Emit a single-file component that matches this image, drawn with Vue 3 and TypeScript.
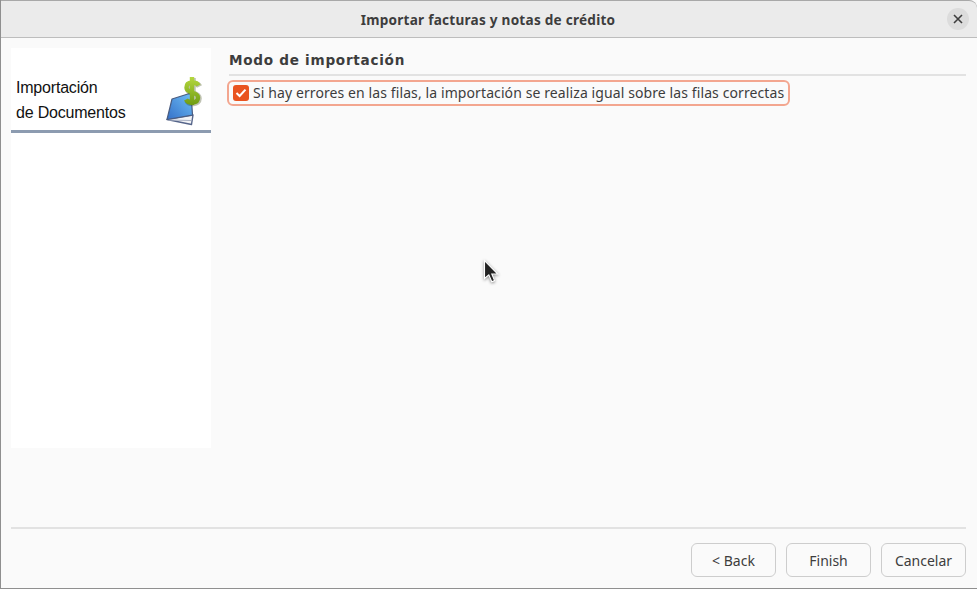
<script setup lang="ts">
const buttons: string[] = ['< Back', 'Finish', 'Cancelar']
</script>

<template>
  <div class="window">
    <header class="titlebar">
      <span class="title">Importar facturas y notas de crédito</span>
      <button class="close" aria-label="Cerrar">
        <svg width="10" height="10" viewBox="0 0 10 10">
          <path d="M1 1 9 9M9 1 1 9" stroke="#3d3d3d" stroke-width="1.6" fill="none" />
        </svg>
      </button>
    </header>
    <main class="body">
      <aside class="side">
        <div class="side-head">
          <div class="side-text">Importación<br />de Documentos</div>
          <svg class="side-icon" width="38" height="50" viewBox="0 0 38 50">
            <defs>
              <linearGradient id="cover" x1="0" y1="1" x2="1" y2="0">
                <stop offset="0" stop-color="#3470c8" />
                <stop offset="1" stop-color="#6fc0f7" />
              </linearGradient>
              <linearGradient id="coin" x1="0" y1="0" x2="0" y2="1">
                <stop offset="0" stop-color="#b5d83e" />
                <stop offset="1" stop-color="#6f9c12" />
              </linearGradient>
            </defs>
            <path d="M1 43.5 25.5 48.5 27 39Z" fill="#f2f3f6" stroke="#56658a" stroke-width="1.4" stroke-linejoin="round" />
            <path d="M3 44 25 44.5" stroke="#aab2c4" stroke-width="1" fill="none" />
            <path d="M1 43.5 6 23 25 17 26.5 39 Z" fill="url(#cover)" stroke="#4a5c80" stroke-width="1.2" stroke-linejoin="round" />
            <path d="M32.5 9.5C30.5 5.5 20.5 5 20.5 11.5C20.5 18 32 15 32 21.5C32 28 22 27.5 20 23.5M26 1V29" stroke="#2e3808" stroke-opacity=".3" stroke-width="5.6" fill="none" transform="translate(1 1)" />
            <path d="M32.5 9.5C30.5 5.5 20.5 5 20.5 11.5C20.5 18 32 15 32 21.5C32 28 22 27.5 20 23.5M26 1V29" stroke="url(#coin)" stroke-width="4.4" fill="none" />
          </svg>
        </div>
      </aside>
      <section class="content">
        <h2 class="section-title">Modo de importación</h2>
        <label class="option">
          <span class="check">
            <svg width="12" height="10" viewBox="0 0 12 10">
              <path d="M1.5 5 4.6 8 10.5 1.6" stroke="#fff" stroke-width="2" fill="none" />
            </svg>
          </span>
          <span class="option-text">Si hay errores en las filas, la importación se realiza igual sobre las filas correctas</span>
        </label>
      </section>
    </main>
    <footer class="footer">
      <div class="actions">
        <button v-for="b in buttons" :key="b" class="btn">{{ b }}</button>
      </div>
    </footer>
    <svg class="cursor" width="18" height="27" viewBox="0 0 18 27">
      <path d="M1.5 1.5V19.5L5.8 15.8 8.8 22.8 11.6 21.6 8.8 15H14.8Z" fill="#232323" stroke="#fff" stroke-width="1.1" />
    </svg>
  </div>
</template>

<style>
html, body { margin: 0; background: #fafafa; }
</style>

<style scoped>
.window {
  position: relative;
  width: 977px;
  height: 589px;
  box-sizing: border-box;
  border-left: 1px solid #8f8f8f;
  border-bottom: 1px solid #8f8f8f;
  background: #fafafa;
  display: flex;
  flex-direction: column;
  overflow: hidden;
  font-family: "Noto Sans", sans-serif;
  color: #3d3d3d;
}
.titlebar {
  height: 38px;
  flex: none;
  box-sizing: border-box;
  border-top: 1px solid #a8a8a8;
  border-bottom: 1px solid #bdbdbd;
  border-top-right-radius: 8px;
  background: #ebebeb;
  display: flex;
  align-items: center;
  justify-content: center;
  position: relative;
}
.title {
  font-size: 13.6px;
  font-weight: 700;
  letter-spacing: 0.24px;
  color: #3d3d3d;
  margin-left: -2px;
  margin-top: 1px;
}
.close {
  position: absolute;
  right: 8px;
  top: 7px;
  width: 22px;
  height: 22px;
  padding: 0;
  border: 0;
  border-radius: 50%;
  background: #dcdcdc;
  display: flex;
  align-items: center;
  justify-content: center;
}
.body {
  flex: 1;
  display: flex;
  padding: 10px 11px 0 10px;
  gap: 18px;
  min-height: 0;
}
.side {
  width: 200px;
  height: 400px;
  flex: none;
  background: #fff;
}
.side-head {
  height: 85px;
  box-sizing: border-box;
  border-bottom: 3px solid #8c9bb0;
  display: flex;
  align-items: flex-end;
  justify-content: space-between;
  padding: 0 7px 5px 5px;
}
.side-text {
  font-family: "Liberation Sans", sans-serif;
  font-size: 16px;
  line-height: 25px;
  letter-spacing: -0.2px;
  color: #111;
}
.side-icon {
  margin-bottom: -1px;
}
.content {
  flex: 1;
  min-width: 0;
  display: flex;
  flex-direction: column;
  align-items: flex-start;
}
.section-title {
  align-self: stretch;
  margin: 0;
  height: 28px;
  box-sizing: border-box;
  border-bottom: 2px solid #e2e2e2;
  font-family: "DejaVu Sans", sans-serif;
  font-size: 13.6px;
  line-height: 24px;
  letter-spacing: 0.72px;
  font-weight: 700;
  color: #3d3d3d;
}
.option {
  margin-top: 4px;
  margin-left: -2px;
  height: 26px;
  box-sizing: border-box;
  border: 2px solid #f3a68f;
  border-radius: 6px;
  display: flex;
  align-items: center;
  padding: 0 4px;
  gap: 4px;
}
.check {
  width: 16px;
  height: 16px;
  border-radius: 3px;
  background: #e95420;
  display: flex;
  align-items: center;
  justify-content: center;
}
.option-text {
  font-size: 14px;
  letter-spacing: 0.1px;
  white-space: nowrap;
  color: #3d3d3d;
  margin-top: -1px;
}
.footer {
  flex: none;
  height: 61px;
  margin: 0 11px 0 10px;
  box-sizing: border-box;
  border-top: 2px solid #e2e2e2;
  display: flex;
  justify-content: flex-end;
  align-items: flex-start;
  padding-top: 14px;
}
.actions {
  display: flex;
  gap: 10px;
}
.btn {
  width: 85px;
  height: 34px;
  box-sizing: border-box;
  border: 1px solid #cdcdcd;
  border-radius: 6px;
  background: #fafafa;
  font-family: "Noto Sans", sans-serif;
  font-size: 14px;
  color: #3d3d3d;
  padding: 0;
}
.cursor {
  position: absolute;
  left: 482px;
  top: 259px;
  filter: drop-shadow(0 1px 1.5px rgba(0, 0, 0, 0.45));
}
</style>
